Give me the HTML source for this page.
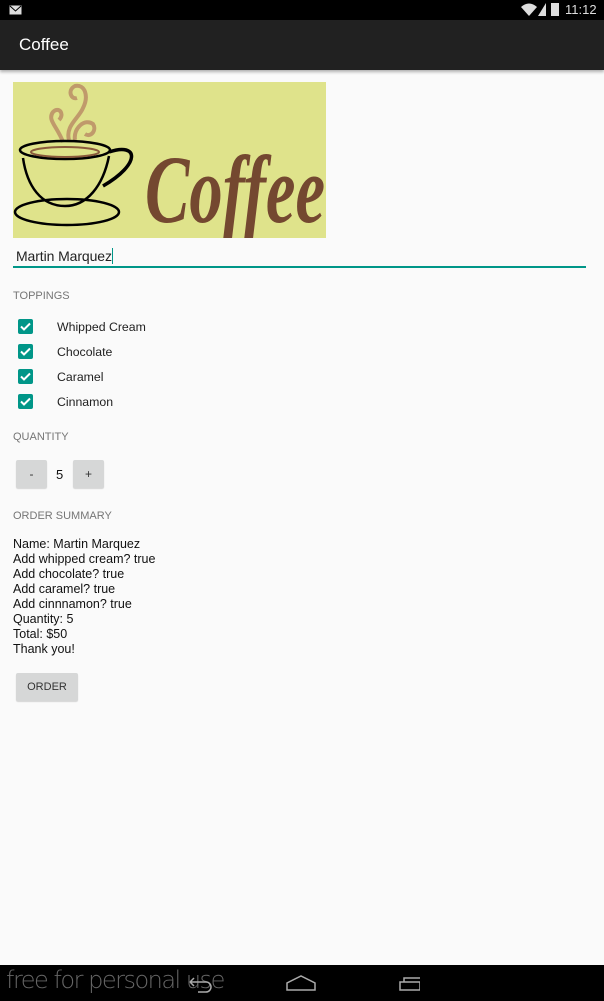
<!DOCTYPE html>
<html><head><meta charset="utf-8"><style>
*{margin:0;padding:0;box-sizing:border-box}
body{width:604px;height:1001px;background:#fafafa;font-family:"Liberation Sans",sans-serif;position:relative;overflow:hidden}
.a{position:absolute}
.status{left:0;top:0;width:604px;height:20px;background:#000}
.bar{left:0;top:20px;width:604px;height:50px;background:#212121;box-shadow:0 2px 3px rgba(0,0,0,.3)}
.hdr{font-size:11px;color:#757575}
.cb{width:15px;height:15px;background:#009688;border-radius:2px;left:18px}
.lbl{left:57px;font-size:12.3px;color:#212121}
.btn{background:#d6d7d7;border-radius:2px;font-size:12px;color:#333;text-align:center;box-shadow:0 1px 1px rgba(0,0,0,.15)}
.sum{left:13px;top:537px;font-size:12.5px;line-height:15px;color:#111}
.nav{left:0;top:965px;width:604px;height:36px;background:#000}
</style></head><body>
<div class="a status"></div>
<svg class="a" style="left:9px;top:5px" width="13" height="10"><rect x="0.5" y="0.5" width="12" height="9" fill="#ddd"/><path d="M1 1 L6.5 6 L12 1" stroke="#000" fill="none"/></svg>
<svg class="a" style="left:520px;top:3px" width="20" height="14"><path d="M1 4 Q9 -3 17 4 L9 13 Z" fill="#ddd"/></svg>
<svg class="a" style="left:538px;top:3px" width="8" height="13"><path d="M0 13 L8 0 L8 13 Z" fill="#ddd"/></svg>
<div class="a" style="left:551px;top:3px;width:8px;height:13px;background:#ddd"></div>
<div class="a" style="left:565px;top:2px;color:#ddd;font-size:13px">11:12</div>
<div class="a bar"></div>
<div class="a" style="left:19px;top:35px;color:#fff;font-size:17px">Coffee</div>
<div class="a" style="left:13px;top:82px;width:313px;height:156px;background:#dfe38b;overflow:hidden">
<svg width="313" height="156" viewBox="0 0 313 156">
<g fill="none" stroke="#c09a6b" stroke-width="4"><path d="M50 60 C44 44 34 38 40 30 C46 24 52 32 46 38 M56 58 C52 44 66 36 70 26 C76 14 72 2 62 4 C54 8 58 18 64 16 M62 58 C60 46 72 36 80 42 C84 48 78 56 72 52"/></g>
<ellipse cx="52" cy="68" rx="45" ry="9" fill="none" stroke="#000" stroke-width="2.5"/>
<ellipse cx="52" cy="70" rx="34" ry="5" fill="none" stroke="#8b5a3c" stroke-width="2"/>
<path d="M10 76 C14 104 28 124 52 124 C74 124 90 104 96 74" fill="none" stroke="#000" stroke-width="2.5"/>
<path d="M96 70 C126 60 128 82 90 104" fill="none" stroke="#000" stroke-width="3.5"/>
<ellipse cx="54" cy="130" rx="52" ry="13" fill="none" stroke="#000" stroke-width="2.5"/>
<text x="132" y="140" textLength="180" lengthAdjust="spacingAndGlyphs" font-family="Liberation Serif,serif" font-style="italic" font-weight="bold" font-size="96" fill="#744830">Coffee</text>
</svg></div>
<div class="a" style="left:16px;top:248px;font-size:14px;color:#222;letter-spacing:-0.1px">Martin Marquez<span style="display:inline-block;width:1px;height:16px;background:#009688;vertical-align:-3px"></span></div>
<div class="a" style="left:13px;top:266px;width:573px;height:2px;background:#009688"></div>
<div class="a hdr" style="left:13px;top:290px">TOPPINGS</div>
<div class="a cb" style="top:319px"></div><div class="a cb" style="top:344px"></div><div class="a cb" style="top:369px"></div><div class="a cb" style="top:394px"></div>
<svg class="a" style="left:18px;top:319px" width="15" height="90"><g fill="none" stroke="#fff" stroke-width="2"><path d="M3 7.5 L6 10.5 L12 4.5"/><path d="M3 32.5 L6 35.5 L12 29.5"/><path d="M3 57.5 L6 60.5 L12 54.5"/><path d="M3 82.5 L6 85.5 L12 79.5"/></g></svg>
<div class="a lbl" style="top:320px">Whipped Cream</div>
<div class="a lbl" style="top:345px">Chocolate</div>
<div class="a lbl" style="top:370px">Caramel</div>
<div class="a lbl" style="top:395px">Cinnamon</div>
<div class="a hdr" style="left:13px;top:431px">QUANTITY</div>
<div class="a btn" style="left:16px;top:460px;width:31px;height:28px;line-height:28px">-</div>
<div class="a" style="left:56px;top:467px;font-size:13px;color:#111">5</div>
<div class="a btn" style="left:73px;top:460px;width:31px;height:28px;line-height:28px">+</div>
<div class="a hdr" style="left:13px;top:510px">ORDER SUMMARY</div>
<div class="a sum">Name: Martin Marquez<br>Add whipped cream? true<br>Add chocolate? true<br>Add caramel? true<br>Add cinnnamon? true<br>Quantity: 5<br>Total: $50<br>Thank you!</div>
<div class="a btn" style="left:16px;top:673px;width:62px;height:28px;line-height:29px;font-size:11px">ORDER</div>
<div class="a nav"></div>
<div class="a" style="left:6px;top:966px;font-size:24px;color:#666;font-family:'DejaVu Sans',sans-serif;letter-spacing:-1.5px;font-weight:200">free for personal use</div>
<svg class="a" style="left:180px;top:970px" width="240" height="26"><g fill="none" stroke="#aaa" stroke-width="1.5"><path d="M10 12 H26 A5 5 0 0 1 26 22 H18 M10 12 L14 8 M10 12 L14 16"/><path d="M107 20 V13 L121 6 L135 13 V20 Z"/><path d="M220 12 H240 V20 H220 Z M224 12 V8 H243 V17 H240"/></g></svg>
</body></html>
